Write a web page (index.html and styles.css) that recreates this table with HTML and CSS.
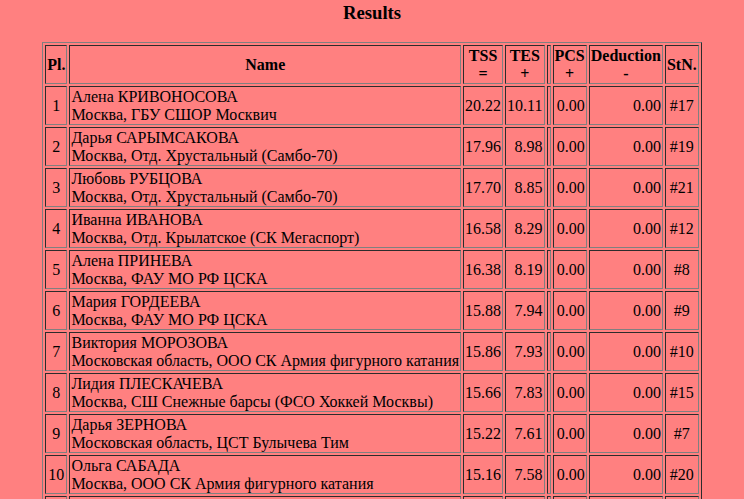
FILE: index.html
```html
<!DOCTYPE html>
<html>
<head>
<meta charset="utf-8">
<link rel="stylesheet" href="styles.css">
</head>
<body>
<h3 class="title">Results</h3>
<table class="results">
<tr>
<th>Pl.</th>
<th>Name</th>
<th>TSS<br>=</th>
<th>TES<br>+</th>
<th class="gap"></th>
<th>PCS<br>+</th>
<th>Deduction<br>-</th>
<th>StN.</th>
</tr>
<tr><td class="c">1</td><td>Алена КРИВОНОСОВА<br>Москва, ГБУ СШОР Москвич</td><td class="r">20.22</td><td class="r">10.11</td><td></td><td class="r">0.00</td><td class="r">0.00</td><td class="c">#17</td></tr>
<tr><td class="c">2</td><td>Дарья САРЫМСАКОВА<br>Москва, Отд. Хрустальный (Самбо-70)</td><td class="r">17.96</td><td class="r">8.98</td><td></td><td class="r">0.00</td><td class="r">0.00</td><td class="c">#19</td></tr>
<tr><td class="c">3</td><td>Любовь РУБЦОВА<br>Москва, Отд. Хрустальный (Самбо-70)</td><td class="r">17.70</td><td class="r">8.85</td><td></td><td class="r">0.00</td><td class="r">0.00</td><td class="c">#21</td></tr>
<tr><td class="c">4</td><td>Иванна ИВАНОВА<br>Москва, Отд. Крылатское (СК Мегаспорт)</td><td class="r">16.58</td><td class="r">8.29</td><td></td><td class="r">0.00</td><td class="r">0.00</td><td class="c">#12</td></tr>
<tr><td class="c">5</td><td>Алена ПРИНЕВА<br>Москва, ФАУ МО РФ ЦСКА</td><td class="r">16.38</td><td class="r">8.19</td><td></td><td class="r">0.00</td><td class="r">0.00</td><td class="c">#8</td></tr>
<tr><td class="c">6</td><td>Мария ГОРДЕЕВА<br>Москва, ФАУ МО РФ ЦСКА</td><td class="r">15.88</td><td class="r">7.94</td><td></td><td class="r">0.00</td><td class="r">0.00</td><td class="c">#9</td></tr>
<tr><td class="c">7</td><td>Виктория МОРОЗОВА<br>Московская область, ООО СК Армия фигурного катания</td><td class="r">15.86</td><td class="r">7.93</td><td></td><td class="r">0.00</td><td class="r">0.00</td><td class="c">#10</td></tr>
<tr><td class="c">8</td><td>Лидия ПЛЕСКАЧЕВА<br>Москва, СШ Снежные барсы (ФСО Хоккей Москвы)</td><td class="r">15.66</td><td class="r">7.83</td><td></td><td class="r">0.00</td><td class="r">0.00</td><td class="c">#15</td></tr>
<tr><td class="c">9</td><td>Дарья ЗЕРНОВА<br>Московская область, ЦСТ Булычева Тим</td><td class="r">15.22</td><td class="r">7.61</td><td></td><td class="r">0.00</td><td class="r">0.00</td><td class="c">#7</td></tr>
<tr><td class="c">10</td><td>Ольга САБАДА<br>Москва, ООО СК Армия фигурного катания</td><td class="r">15.16</td><td class="r">7.58</td><td></td><td class="r">0.00</td><td class="r">0.00</td><td class="c">#20</td></tr>
<tr><td class="c">11</td><td>Анна ПЕТРОВА<br>Москва, ГБУ СШОР Москвич</td><td class="r">14.90</td><td class="r">7.45</td><td></td><td class="r">0.00</td><td class="r">0.00</td><td class="c">#5</td></tr>
<tr><td class="c">12</td><td>Мария СМИРНОВА<br>Москва, ФАУ МО РФ ЦСКА</td><td class="r">14.50</td><td class="r">7.25</td><td></td><td class="r">0.00</td><td class="r">0.00</td><td class="c">#3</td></tr>
</table>
</body>
</html>
```
FILE: styles.css
```css
html, body {
  background: #ff8080;
}
body {
  margin: 2px 8px 8px;
  font-family: "Liberation Serif", "Times New Roman", serif;
  font-size: 16px;
  color: #000;
}
.title {
  text-align: center;
  font-size: 18.72px;
  font-weight: bold;
  margin: 0 0 18px 0;
}
.results {
  margin: 0 auto;
  border: 1px outset grey;
  border-spacing: 2px;
  border-collapse: separate;
}
.results th, .results td {
  border: 1px inset grey;
  padding: 1px;
  line-height: 17.5px;
}
.results th {
  font-weight: bold;
  text-align: center;
  vertical-align: middle;
}
.results td {
  text-align: left;
  vertical-align: middle;
}
.results td.c { text-align: center; }
.results td.r { text-align: right; }
```
